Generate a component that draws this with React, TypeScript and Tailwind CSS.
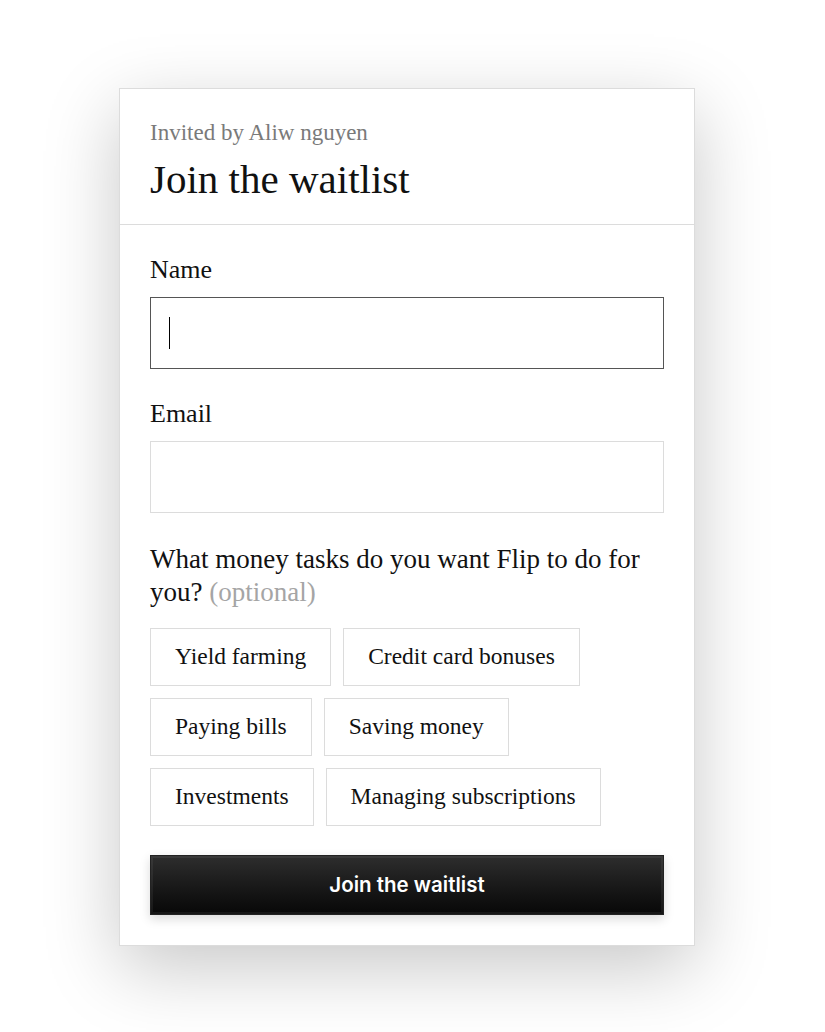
import React, { useState } from 'react';

const tasks = [
  'Yield farming',
  'Credit card bonuses',
  'Paying bills',
  'Saving money',
  'Investments',
  'Managing subscriptions',
];

export default function App() {
  const [picked, setPicked] = useState<string[]>([]);

  const toggle = (t: string) =>
    setPicked((p) => (p.includes(t) ? p.filter((x) => x !== t) : [...p, t]));

  return (
    <div className="min-h-screen bg-white flex pl-[119px] pt-[88px] font-['Liberation_Serif',serif]">
      <div className="w-[576px] h-[858px] bg-white border border-[#dcdcdc] shadow-[0_22px_70px_rgba(0,0,0,0.22)]">
        <div className="px-[30px] pt-[30px] pb-[23px] border-b border-[#dcdcdc]">
          <p className="text-[23px] leading-[28px] text-[#7a7a7a]">Invited by Aliw nguyen</p>
          <h1 className="mt-[10px] text-[41px] leading-[44px] text-[#111]">Join the waitlist</h1>
        </div>

        <div className="px-[30px] pt-[30px]">
          <label className="block text-[26px] leading-[30px] text-[#111]">Name</label>
          <div className="mt-[12px] h-[72px] border border-[#555] flex items-center px-[18px]">
            <span className="w-px h-[32px] bg-black" />
          </div>

          <label className="block mt-[30px] text-[26px] leading-[30px] text-[#111]">Email</label>
          <div className="mt-[12px] h-[72px] border border-[#dcdcdc]" />

          <p className="mt-[30px] text-[27px] leading-[33px] text-[#111]">
            What money tasks do you want Flip to do for you?{' '}
            <span className="text-[#a5a5a5]">(optional)</span>
          </p>

          <div className="mt-[19px] flex flex-wrap gap-[12px]">
            {tasks.map((t) => (
              <button
                key={t}
                onClick={() => toggle(t)}
                className={`h-[58px] px-[24px] border text-[23.5px] text-[#111] ${
                  picked.includes(t) ? 'border-[#555]' : 'border-[#dcdcdc]'
                }`}
              >
                {t}
              </button>
            ))}
          </div>

          <button className="mt-[29px] w-full h-[60px] border border-[#222] bg-gradient-to-b from-[#2e2e2e] to-[#080808] shadow-[inset_0_0_0_2px_rgba(255,255,255,0.06),0_4px_10px_rgba(0,0,0,0.15)] text-white text-[20.5px] font-semibold font-['Inter',sans-serif]">
            Join the waitlist
          </button>
        </div>
      </div>
    </div>
  );
}
